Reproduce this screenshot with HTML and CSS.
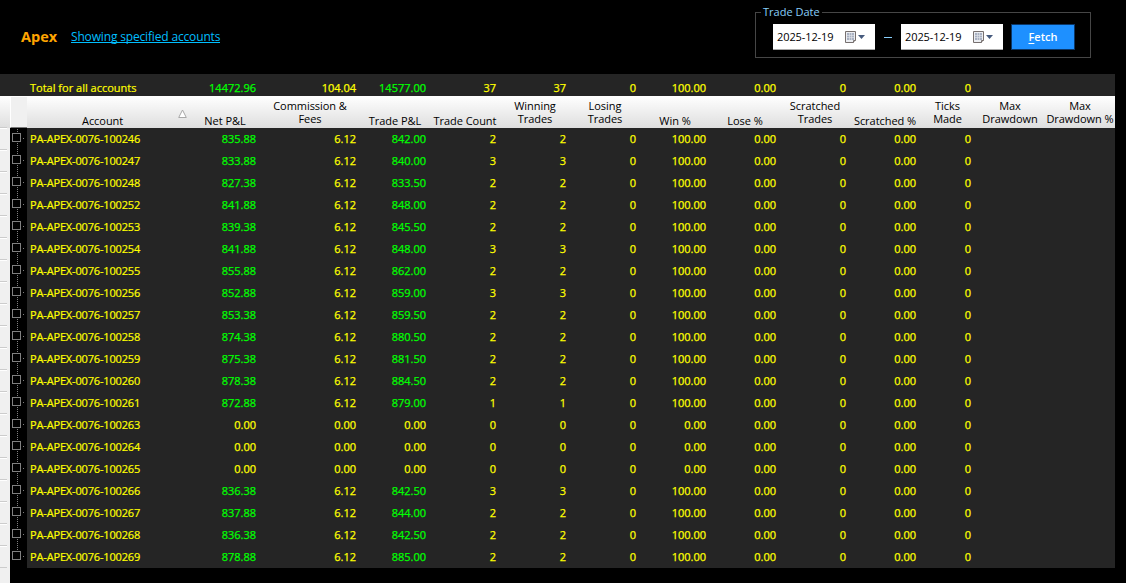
FILE: index.html
```html
<!DOCTYPE html>
<html lang="en">
<head>
    <meta charset="UTF-8">
    <title>Apex - Trade Performance</title>
    <link rel="stylesheet" href="styles.css">
</head>
<body>
    <header class="toolbar">
        <h1>Apex</h1>
        <a class="filter-link" href="#">Showing specified accounts</a>

        <div class="trade-date">
            <span class="legend">Trade Date</span>
            <div class="date-box">
                <span class="date-text">2025-12-19</span>
                <svg class="calendar" width="20" height="13" viewBox="0 0 20 13">
                    <path d="M.5.5h10v9l-2 2h-8z" fill="#eceef2" stroke="#77706f"/>
                    <path d="M2 2h7v7H2z" fill="#a9b1c2"/>
                    <path d="M2 4.5h7M2 6.5h7M4.5 2v7M6.5 2v7" stroke="#e4e7ec" stroke-width=".6"/>
                    <path d="M8.5 11.5v-2h2" fill="#fff" stroke="#77706f"/>
                    <path d="M13 4h7l-3.5 4z" fill="#465a7d"/>
                </svg>
            </div>
            <span class="dash"></span>
            <div class="date-box">
                <span class="date-text">2025-12-19</span>
                <svg class="calendar" width="20" height="13" viewBox="0 0 20 13">
                    <path d="M.5.5h10v9l-2 2h-8z" fill="#eceef2" stroke="#77706f"/>
                    <path d="M2 2h7v7H2z" fill="#a9b1c2"/>
                    <path d="M2 4.5h7M2 6.5h7M4.5 2v7M6.5 2v7" stroke="#e4e7ec" stroke-width=".6"/>
                    <path d="M8.5 11.5v-2h2" fill="#fff" stroke="#77706f"/>
                    <path d="M13 4h7l-3.5 4z" fill="#465a7d"/>
                </svg>
            </div>
            <button class="fetch"><u>F</u>etch</button>
        </div>
    </header>

    <div class="grid-row totals" id="totals"></div>

    <div class="grid-row head">
        <div class="gutter"></div>
        <div class="corner"></div>
        <div class="account">
            <span>Account</span>
            <svg class="sort" width="9" height="9" viewBox="0 0 9 9"><path d="M4.5 1L8.3 8.5H.7z" fill="#fff" stroke="#a8a8a8"/></svg>
        </div>
        <div>Net P&amp;L</div>
        <div class="two">Commission &amp;<br>Fees</div>
        <div>Trade P&amp;L</div>
        <div>Trade Count</div>
        <div class="two">Winning<br>Trades</div>
        <div class="two">Losing<br>Trades</div>
        <div>Win %</div>
        <div>Lose %</div>
        <div class="two">Scratched<br>Trades</div>
        <div>Scratched %</div>
        <div class="two">Ticks<br>Made</div>
        <div class="two">Max<br>Drawdown</div>
        <div class="two">Max<br>Drawdown %</div>
    </div>

    <div id="rows"></div>
    <div class="strip-end"></div>

    <script>
        // account suffix, net, fees, trade p&l, trades
        const accounts = [
            [246, '835.88', '6.12', '842.00', 2],
            [247, '833.88', '6.12', '840.00', 3],
            [248, '827.38', '6.12', '833.50', 2],
            [252, '841.88', '6.12', '848.00', 2],
            [253, '839.38', '6.12', '845.50', 2],
            [254, '841.88', '6.12', '848.00', 3],
            [255, '855.88', '6.12', '862.00', 2],
            [256, '852.88', '6.12', '859.00', 3],
            [257, '853.38', '6.12', '859.50', 2],
            [258, '874.38', '6.12', '880.50', 2],
            [259, '875.38', '6.12', '881.50', 2],
            [260, '878.38', '6.12', '884.50', 2],
            [261, '872.88', '6.12', '879.00', 1],
            [263, '0.00', '0.00', '0.00', 0],
            [264, '0.00', '0.00', '0.00', 0],
            [265, '0.00', '0.00', '0.00', 0],
            [266, '836.38', '6.12', '842.50', 3],
            [267, '837.88', '6.12', '844.00', 2],
            [268, '836.38', '6.12', '842.50', 2],
            [269, '878.88', '6.12', '885.00', 2]
        ];

        function cells(name, net, fees, pnl, count) {
            const win = count > 0 ? '100.00' : '0.00';
            const values = [net, fees, pnl, count, count, 0, win, '0.00', 0, '0.00', 0, '', ''];
            return `<div class="account">${name}</div>` + values.map((v, i) => {
                const gain = (i === 0 || i === 2) && Number(v) > 0;
                return `<div class="num${gain ? ' gain' : ''}">${v}</div>`;
            }).join('');
        }

        document.getElementById('totals').innerHTML =
            '<div></div><div></div>' + cells('Total for all accounts', '14472.96', '104.04', '14577.00', 37);

        document.getElementById('rows').innerHTML = accounts.map(([id, ...rest]) =>
            `<div class="grid-row data"><div class="gutter"></div><div class="tree"><i class="box"></i></div>${cells('PA-APEX-0076-100' + id, ...rest)}</div>`
        ).join('');
    </script>
</body>
</html>
```
FILE: styles.css
```css
* {
    box-sizing: border-box;
}

body {
    margin: 0;
    height: 583px;
    overflow: hidden;
    background: #000;
    color: #ff0;
    font-family: "Open Sans", "Noto Sans", sans-serif;
    font-size: 11px;
}

.toolbar {
    display: flex;
    height: 74px;
    padding: 12px 35px 0 21px;
}

h1 {
    margin: 13px 0 0;
    width: 50px;
    font-size: 14.5px;
    line-height: 24px;
    color: #ffa500;
}

.filter-link {
    margin-top: 16px;
    height: 15px;
    font-size: 12px;
    line-height: 17px;
    letter-spacing: -0.16px;
    color: #00bfff;
    text-decoration: none;
    border-bottom: 1px solid #00bfff;
}

.trade-date {
    position: relative;
    display: flex;
    margin-left: auto;
    width: 336px;
    height: 46px;
    padding: 11px 0 0 17px;
    border: 1px solid #464646;
}

.legend {
    position: absolute;
    left: 5px;
    top: -8px;
    width: 61px;
    padding-left: 2px;
    line-height: 14px;
    white-space: nowrap;
    background: #000;
    color: #87cefa;
}

.date-box {
    display: flex;
    align-items: center;
    width: 102px;
    height: 26px;
    padding: 0 0 0 4px;
    background: #fff;
    border-bottom: 1px solid #aaa;
    color: #000;
}

.date-text {
    width: 68px;
    letter-spacing: -0.1px;
}

.calendar {
    margin-top: 1px;
}

.dash {
    width: 8px;
    height: 1px;
    margin: 13px 9px 0;
    background: #87cefa;
}

.fetch {
    width: 64px;
    height: 26px;
    margin-left: 8px;
    padding: 0 0 2px;
    background: #1e90ff;
    border: 1px solid #0b3768;
    color: #fff;
    font: 600 11px "Open Sans", sans-serif;
}

.fetch u {
    text-underline-offset: 2px;
}

.grid-row {
    display: grid;
    grid-template-columns: 10px 17px 163px 70px 100px 70px 70px 70px 70px 70px 70px 70px 70px 55px 70px 70px;
    width: 1115px;
    height: 22px;
    line-height: 22px;
    background: #252525;
    white-space: nowrap;
}

.totals {
    line-height: 28px;
}

.grid-row .account {
    padding-left: 3px;
    -webkit-text-stroke: 0.2px;
}

.data .account {
    letter-spacing: -0.16px;
}

.num {
    padding-right: 4px;
    text-align: right;
    -webkit-text-stroke: 0.25px;
}

.gain {
    color: #0f0;
}

.head {
    height: 32px;
    padding-top: 18px;
    background: linear-gradient(#fff, #dedede);
    color: #000;
    text-align: center;
    line-height: 14px;
    letter-spacing: -0.05px;
}

.head .two {
    margin-top: -15px;
    line-height: 13px;
}

.head .account {
    display: flex;
    padding-left: 55px;
    -webkit-text-stroke: 0;
}

.head .sort {
    margin: -5px 3px 0 auto;
}

.corner {
    height: 31px;
    margin-top: -17px;
    background: #f0f0f0;
    border-left: 1px solid #fff;
    border-bottom: 1px solid #777;
}

.gutter {
    background: linear-gradient(#fff, #fff) 0 0 / 7px 1px no-repeat,
                linear-gradient(#ccc, #ccc) 0 21px / 7px 1px no-repeat,
                #f0f0f0;
}

.head .gutter {
    background: linear-gradient(#ccc, #ccc) 0 13px / 7px 1px no-repeat;
}

.tree {
    padding: 5px 0 0 2px;
    background: radial-gradient(circle, #808080, #808080) 13px 10px / 1px 1px no-repeat,
                repeating-linear-gradient(#000 0 1px, #808080 1px 2px) 7px 0 / 1px 100% no-repeat,
                #000;
}

.box {
    display: block;
    width: 9px;
    height: 9px;
    border: 1px solid #808080;
    background: #000;
}

.data:last-child .tree {
    background-size: 1px 1px, 1px 6px;
}

.strip-end {
    width: 10px;
    height: 15px;
    background: #f0f0f0;
}
```
